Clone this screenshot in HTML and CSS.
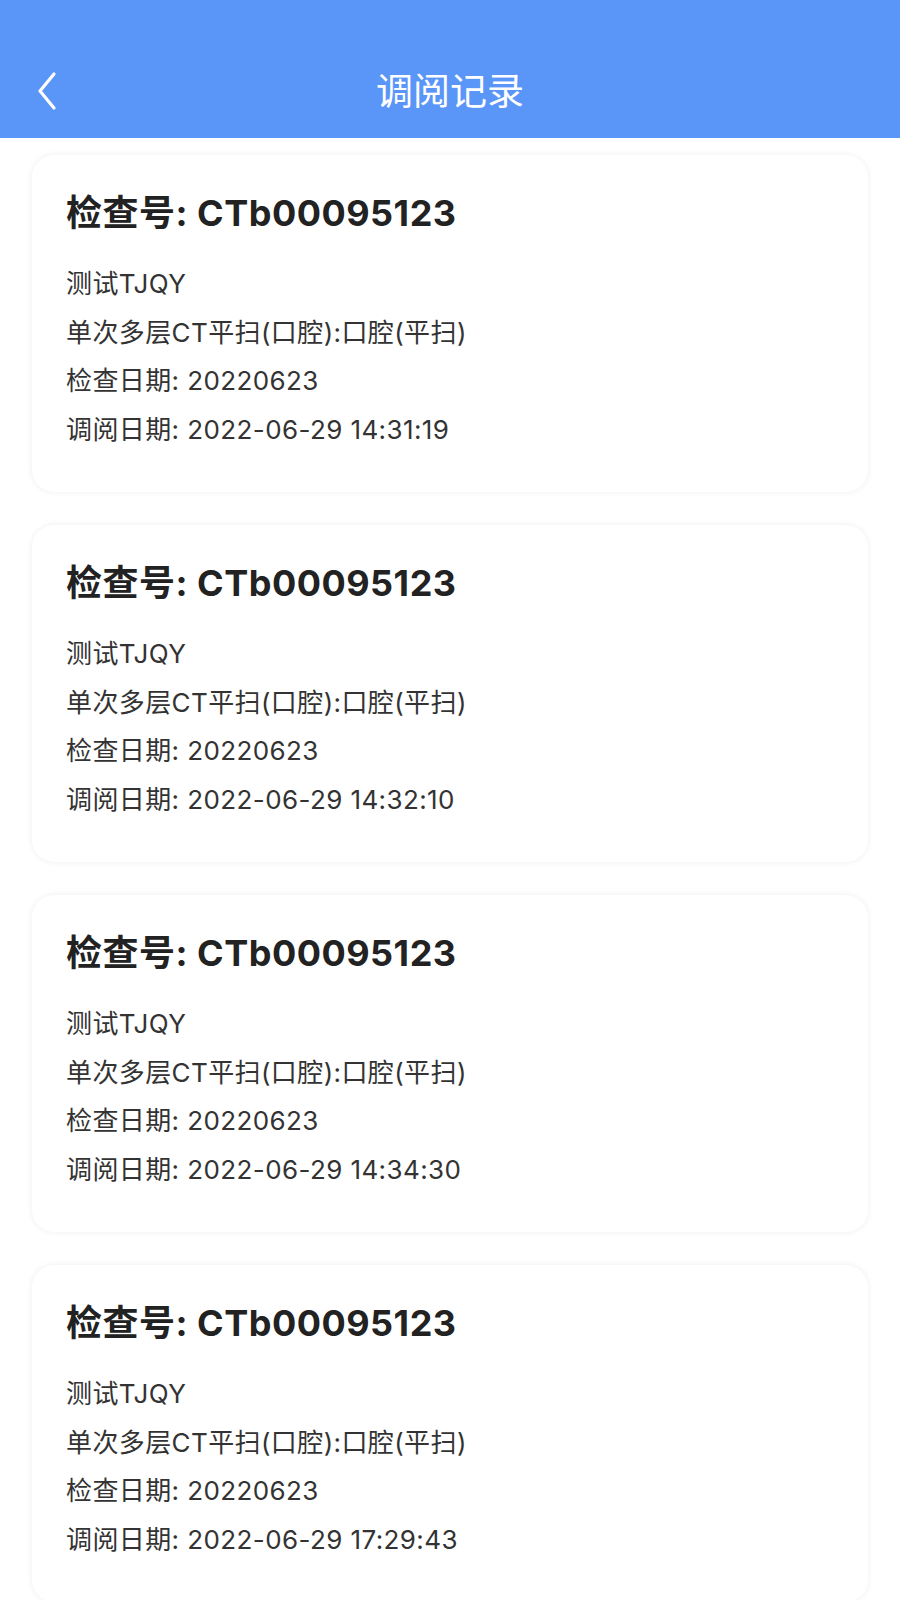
FILE: index.html
```html
<!DOCTYPE html>
<html lang="zh-CN">
<head>
<meta charset="utf-8">
<title>调阅记录</title>
<link rel="stylesheet" href="styles.css">
</head>
<body>
<header class="topbar">
  <div class="navbar">
    <button class="back" aria-label="返回">
      <svg viewBox="0 0 24 40" width="24" height="40"><path d="M19 3 L5 20 L19 37" fill="none" stroke="#fff" stroke-width="3.2" stroke-linecap="round" stroke-linejoin="round"/></svg>
    </button>
    <h1 class="nav-title">调阅记录</h1>
  </div>
</header>
<main class="list">
  <section class="card">
    <h2 class="card-title">检查号: CTb00095123</h2>
    <div class="card-body">
      <p class="line">测试TJQY</p>
      <p class="line">单次多层CT平扫(口腔):口腔(平扫)</p>
      <p class="line">检查日期: 20220623</p>
      <p class="line">调阅日期: 2022-06-29 14:31:19</p>
    </div>
  </section>
  <section class="card">
    <h2 class="card-title">检查号: CTb00095123</h2>
    <div class="card-body">
      <p class="line">测试TJQY</p>
      <p class="line">单次多层CT平扫(口腔):口腔(平扫)</p>
      <p class="line">检查日期: 20220623</p>
      <p class="line">调阅日期: 2022-06-29 14:32:10</p>
    </div>
  </section>
  <section class="card">
    <h2 class="card-title">检查号: CTb00095123</h2>
    <div class="card-body">
      <p class="line">测试TJQY</p>
      <p class="line">单次多层CT平扫(口腔):口腔(平扫)</p>
      <p class="line">检查日期: 20220623</p>
      <p class="line">调阅日期: 2022-06-29 14:34:30</p>
    </div>
  </section>
  <section class="card">
    <h2 class="card-title">检查号: CTb00095123</h2>
    <div class="card-body">
      <p class="line">测试TJQY</p>
      <p class="line">单次多层CT平扫(口腔):口腔(平扫)</p>
      <p class="line">检查日期: 20220623</p>
      <p class="line">调阅日期: 2022-06-29 17:29:43</p>
    </div>
  </section>
</main>
</body>
</html>
```
FILE: styles.css
```css
* { box-sizing: border-box; }
html, body { margin: 0; padding: 0; background: #fff; }
body {
  font-family: "Inter", "Noto Sans CJK SC", sans-serif;
  color: #333;
}
.topbar {
  background: #5a95f8;
  padding-top: 44px;
}
.navbar {
  height: 94px;
  display: flex;
  align-items: center;
  justify-content: center;
  position: relative;
}
.back {
  position: absolute;
  left: 35px;
  top: 50%;
  transform: translateY(-50%);
  background: none;
  border: 0;
  padding: 0;
  display: flex;
}
.nav-title {
  margin: 0;
  color: #fff;
  font-size: 37px;
  font-weight: 400;
  line-height: 1;
}
.list {
  padding: 17px 32px;
  display: flex;
  flex-direction: column;
  gap: 33px;
}
.card {
  background: #fff;
  border-radius: 22px;
  box-shadow: 0 0 6px rgba(0, 0, 0, 0.07);
  padding: 36px 34px 38px;
}
.card-title {
  margin: 0;
  font-size: 36px;
  line-height: 44px;
  font-weight: 700;
  letter-spacing: 0.5px;
  color: #222;
}
.card-body {
  margin-top: 25px;
}
.line {
  margin: 0;
  font-size: 26px;
  line-height: 48.5px;
  letter-spacing: 0.4px;
  color: #333;
}
```
